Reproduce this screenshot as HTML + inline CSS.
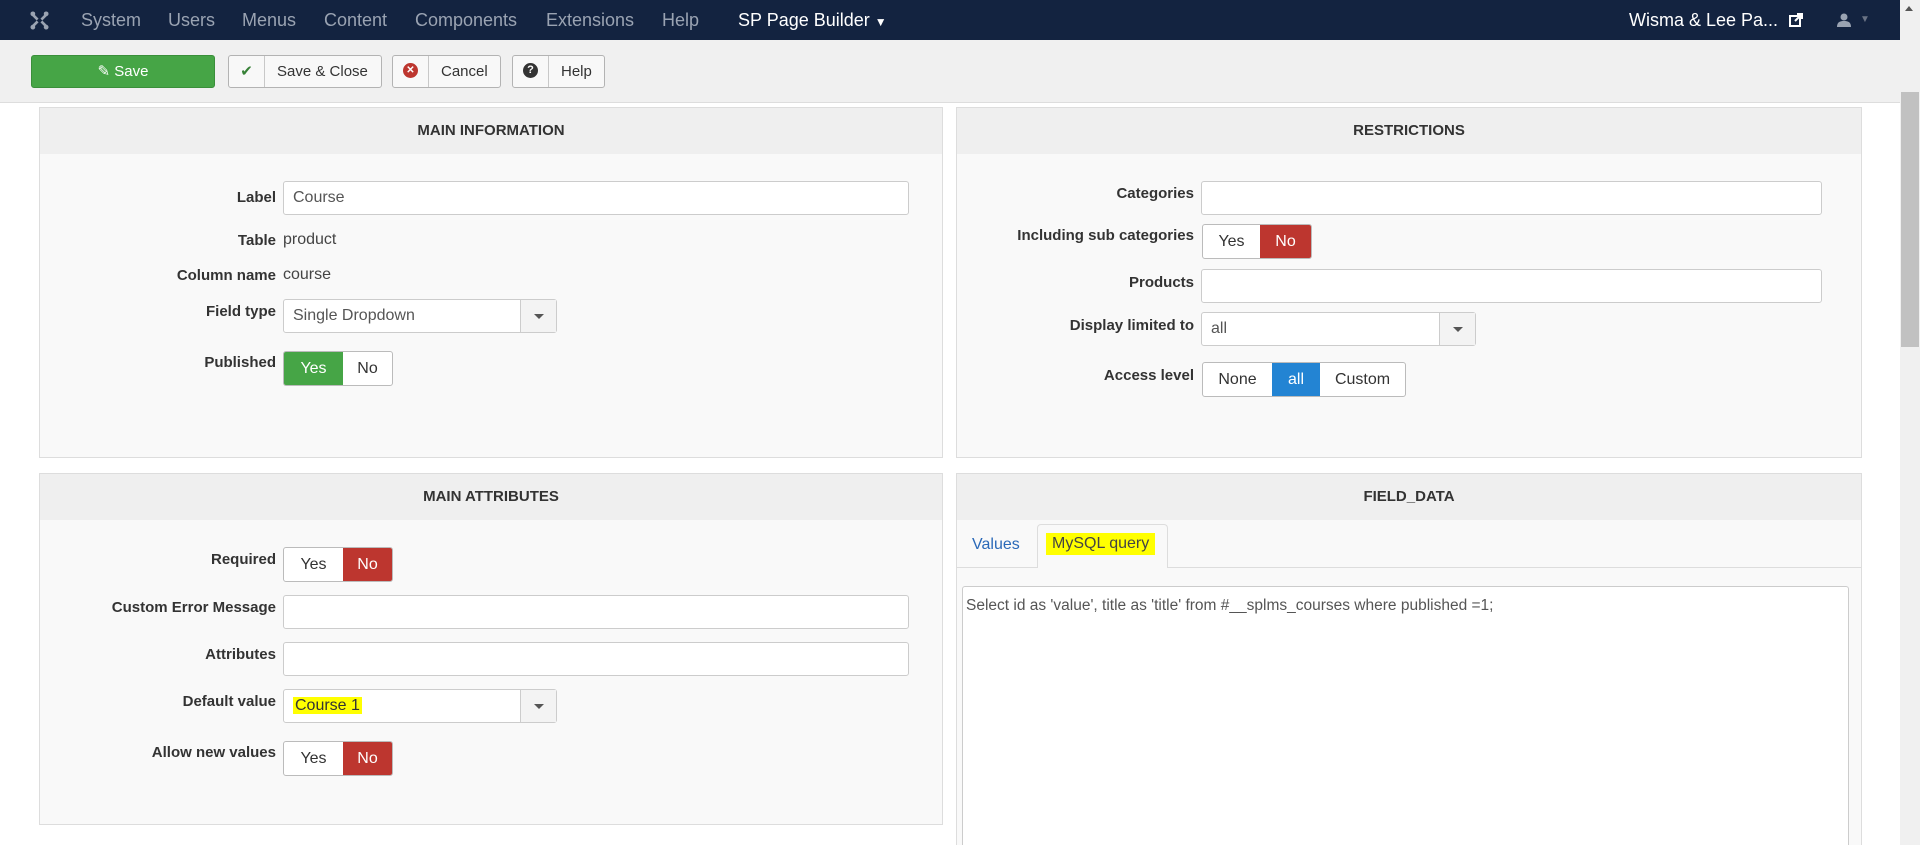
<!DOCTYPE html>
<html style="overflow:hidden;height:845px"><head><meta charset="utf-8"><style>
*{box-sizing:border-box;margin:0;padding:0}
body{width:1920px;height:845px;overflow:hidden;background:#fff;font-family:"Liberation Sans",sans-serif;font-size:16px;color:#333;position:relative}
.a{position:absolute}
.nav{left:0;top:0;width:1900px;height:40px;background:#132340}
.nav span{position:absolute;top:10px;font-size:18px;color:#9aa3b2}
.tb{left:0;top:40px;width:1900px;height:63px;background:#f0f0f0;border-bottom:1px solid #ddd}
.btn{position:absolute;top:55px;height:33px;border:1px solid #b3b3b3;border-radius:3px;background:#f8f8f8;font-size:15px;line-height:31px;color:#333}
.btn .ic{display:inline-block;width:36px;height:31px;border-right:1px solid #c8c8c8;text-align:center;vertical-align:top;position:relative}
.btn .tx{display:inline-block;padding:0 12px}
.dot{position:absolute;left:10px;top:8px;width:15px;height:15px;border-radius:50%;color:#fff;font-size:10px;line-height:15px;text-align:center;font-weight:bold}
.panel{border:1px solid #ddd;background:#f9f9f9}
.ph{position:absolute;left:0;top:0;right:0;height:46px;background:#efefef;text-align:center;font-weight:bold;font-size:15px;line-height:46px;color:#333}
.lb{position:absolute;font-weight:bold;text-align:right;font-size:15px;color:#333}
.in{position:absolute;height:34px;border:1px solid #ccc;border-radius:3px;background:#fff;font-size:16px;line-height:32px;padding-left:9px;color:#555}
.sel .car{position:absolute;right:0;top:0;width:36px;height:32px;border-left:1px solid #ccc;background:#f3f3f3}
.sel .car:after{content:"";position:absolute;left:13px;top:14px;border:5px solid transparent;border-top:5px solid #555;border-bottom:0}
.tg{position:absolute;height:35px;border:1px solid #bbb;border-radius:3px;background:#fff;display:flex;overflow:hidden;font-size:16px;line-height:33px}
.tg div{text-align:center}
.g{background:#46a546;color:#fff}.r{background:#bd362f;color:#fff}.b{background:#2384d3;color:#fff}
.tv{position:absolute;font-size:16px;color:#444}
</style></head><body>
<div class="a nav">
<svg class="a" style="left:30px;top:11px" width="19" height="19" viewBox="0 0 20 20" fill="#9aa3b2"><path d="M3 2l6 6-2 2-6-6zM17 2l2 2-6 6-2-2zM3 18l-2-2 6-6 2 2zM17 18l-6-6 2-2 6 6z"/><circle cx="3" cy="3" r="2.5"/><circle cx="17" cy="3" r="2.5"/><circle cx="3" cy="17" r="2.5"/><circle cx="17" cy="17" r="2.5"/></svg>
<span style="left:81px">System</span><span style="left:168px">Users</span><span style="left:242px">Menus</span><span style="left:324px">Content</span><span style="left:415px">Components</span><span style="left:546px">Extensions</span><span style="left:662px">Help</span>
<span style="left:738px;color:#fff">SP Page Builder <small style="font-size:12px">▼</small></span>
<span style="left:1629px;color:#fff">Wisma &amp; Lee Pa...</span>
<svg class="a" style="left:1789px;top:13px" width="14" height="14" viewBox="0 0 14 14"><rect x="1" y="3" width="10" height="10" fill="none" stroke="#fff" stroke-width="2"/><path d="M6 8L13 1M8 1h5v5" stroke="#fff" stroke-width="2" fill="none"/></svg>
<svg class="a" style="left:1837px;top:13px" width="14" height="14" viewBox="0 0 14 14" fill="#9aa3b2"><circle cx="7" cy="4" r="3.5"/><path d="M0 14c0-5 3-6 7-6s7 1 7 6z"/></svg>
<span style="left:1860px;top:14px;font-size:10px;color:#6a7385">▼</span>
</div>
<div class="a tb"></div>
<div class="btn" style="left:31px;width:184px;background:#46a546;border-color:#3a8f3a;color:#fff;text-align:center">&#9998; Save</div>
<div class="btn" style="left:228px;width:154px"><span class="ic" style="color:#378137">✔</span><span class="tx">Save &amp; Close</span></div>
<div class="btn" style="left:392px;width:109px"><span class="ic"><span class="dot" style="background:#bd362f;top:7px">✕</span></span><span class="tx">Cancel</span></div>
<div class="btn" style="left:512px;width:93px"><span class="ic"><span class="dot" style="background:#333;top:7px;font-size:11px">?</span></span><span class="tx">Help</span></div>

<div class="a panel" style="left:39px;top:107px;width:904px;height:351px"><div class="ph">MAIN INFORMATION</div></div>
<div class="a panel" style="left:956px;top:107px;width:906px;height:351px"><div class="ph">RESTRICTIONS</div></div>
<div class="a panel" style="left:39px;top:473px;width:904px;height:352px"><div class="ph">MAIN ATTRIBUTES</div></div>
<div class="a panel" style="left:956px;top:473px;width:906px;height:372px;border-bottom:none"><div class="ph">FIELD_DATA</div></div>

<div class="lb" style="right:1644px;top:189px">Label</div>
<div class="in" style="left:283px;top:181px;width:626px">Course</div>
<div class="lb" style="right:1644px;top:232px">Table</div><div class="tv" style="left:283px;top:231px">product</div>
<div class="lb" style="right:1644px;top:267px">Column name</div><div class="tv" style="left:283px;top:266px">course</div>
<div class="lb" style="right:1644px;top:303px">Field type</div>
<div class="in sel" style="left:283px;top:299px;width:274px">Single Dropdown<div class="car"></div></div>
<div class="lb" style="right:1644px;top:354px">Published</div>
<div class="tg" style="left:283px;top:351px;width:110px"><div class="g" style="width:59px">Yes</div><div style="flex:1">No</div></div>

<div class="lb" style="right:726px;top:185px">Categories</div>
<div class="in" style="left:1201px;top:181px;width:621px"></div>
<div class="lb" style="right:726px;top:227px">Including sub categories</div>
<div class="tg" style="left:1202px;top:224px;width:110px"><div style="width:57px">Yes</div><div class="r" style="flex:1">No</div></div>
<div class="lb" style="right:726px;top:274px">Products</div>
<div class="in" style="left:1201px;top:269px;width:621px"></div>
<div class="lb" style="right:726px;top:317px">Display limited to</div>
<div class="in sel" style="left:1201px;top:312px;width:275px">all<div class="car"></div></div>
<div class="lb" style="right:726px;top:367px">Access level</div>
<div class="tg" style="left:1202px;top:362px;width:204px"><div style="width:69px">None</div><div class="b" style="width:48px">all</div><div style="flex:1">Custom</div></div>

<div class="lb" style="right:1644px;top:551px">Required</div>
<div class="tg" style="left:283px;top:547px;width:110px"><div style="width:59px">Yes</div><div class="r" style="flex:1">No</div></div>
<div class="lb" style="right:1644px;top:599px">Custom Error Message</div>
<div class="in" style="left:283px;top:595px;width:626px"></div>
<div class="lb" style="right:1644px;top:646px">Attributes</div>
<div class="in" style="left:283px;top:642px;width:626px"></div>
<div class="lb" style="right:1644px;top:693px">Default value</div>
<div class="in sel" style="left:283px;top:689px;width:274px;color:#333"><span style="background:#ffff00;padding:0 2px">Course 1</span><div class="car"></div></div>
<div class="lb" style="right:1644px;top:744px">Allow new values</div>
<div class="tg" style="left:283px;top:741px;width:110px"><div style="width:59px">Yes</div><div class="r" style="flex:1">No</div></div>

<div class="a" style="left:957px;top:567px;width:904px;height:1px;background:#ddd"></div>
<div class="a" style="left:1037px;top:524px;width:131px;height:44px;background:#f9f9f9;border:1px solid #ddd;border-bottom:none;border-radius:4px 4px 0 0"></div>
<div class="tv" style="left:972px;top:536px;color:#2a69b8">Values</div>
<div class="tv" style="left:1046px;top:533px;background:#ffff00;padding:2px 6px;color:#444">MySQL query</div>
<div class="a" style="left:962px;top:586px;width:887px;height:259px;background:#fff;border:1px solid #ccc;border-bottom:none;border-radius:3px 3px 0 0"></div>
<div class="tv" style="left:966px;top:597px;color:#555;font-size:15.5px">Select id as 'value', title as 'title' from #__splms_courses where published =1;</div>

<div class="a" style="left:1900px;top:0;width:20px;height:845px;background:#f0f0f0"></div>
<div class="a" style="left:1905px;top:6px;border:4px solid transparent;border-bottom:5px solid #555;border-top:0"></div>
<div class="a" style="left:1901px;top:92px;width:18px;height:255px;background:#c1c1c1"></div>
</body></html>
